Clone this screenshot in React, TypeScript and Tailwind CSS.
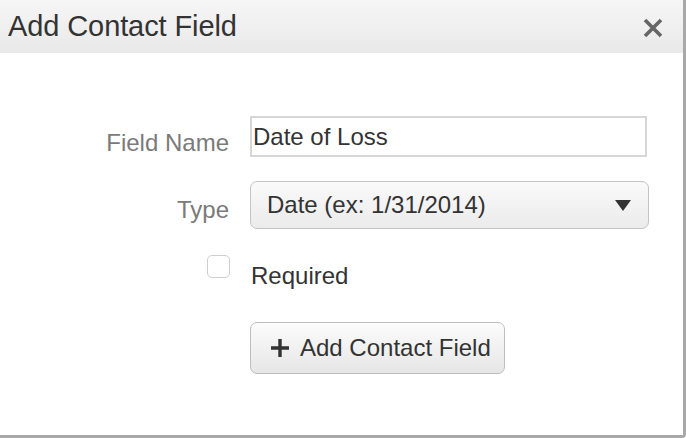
import React from "react";

export default function App() {
  return (
    <div className="w-[686px] h-[438px] bg-white" style={{ fontFamily: '"Liberation Sans", Arial, sans-serif' }}>
      <div className="w-[686px] h-[438px] bg-white border-r-[3px] border-b-[3px] border-[#a8a8a8] rounded-br-[4px] flex flex-col">
        <div className="h-[53px] bg-gradient-to-b from-[#f6f6f6] to-[#e9e9e9] flex items-center justify-between pl-[8px] pr-[19px]">
          <span className="text-[29px] text-[#333] tracking-[-0.1px] leading-none">Add Contact Field</span>
          <svg width="22" height="22" viewBox="0 0 22 22" className="mt-[3px]">
            <path d="M3 3 L19 19 M19 3 L3 19" stroke="#666" strokeWidth="3.6" strokeLinecap="butt" />
          </svg>
        </div>
        <div className="flex flex-col pt-[63px]">
          <div className="flex items-center h-[41px]">
            <div className="w-[229px] text-right text-[24px] text-[#7a7a7a] pt-[12px]">Field Name</div>
            <div className="ml-[21px] w-[397px] h-[41px] border-2 border-[#d6d6d6] flex items-center pl-[1px] text-[24px] text-[#333]">
              Date of Loss
            </div>
          </div>
          <div className="flex items-center h-[48px] mt-[24px]">
            <div className="w-[229px] text-right text-[24px] text-[#7a7a7a] pt-[9px]">Type</div>
            <div className="ml-[21px] w-[399px] h-[48px] border border-[#c4c4c4] rounded-[7px] bg-gradient-to-b from-[#fafafa] to-[#ebebeb] flex items-center justify-between pl-[16px] pr-[17px] text-[24px] text-[#333]">
              <span>Date (ex: 1/31/2014)</span>
              <svg width="16" height="11" viewBox="0 0 16 11">
                <path d="M0 0 L16 0 L8 11 Z" fill="#333" />
              </svg>
            </div>
          </div>
          <div className="flex items-center mt-[27px] h-[30px]">
            <div className="w-[229px] flex justify-end">
              <div className="w-[23px] h-[23px] rounded-[5px] border border-[#cfcfcf] bg-white mr-[-1px] mt-[-10px]" />
            </div>
            <div className="ml-[22px] text-[24px] text-[#333] pt-[9px]">Required</div>
          </div>
          <div className="flex mt-[36px]">
            <div className="w-[229px]" />
            <div className="ml-[21px] w-[255px] h-[52px] border border-[#bdbdbd] rounded-[7px] bg-gradient-to-b from-[#fcfcfc] to-[#e6e6e6] flex items-center pl-[20px] text-[24px] text-[#333]">
              <svg width="18" height="18" viewBox="0 0 18 18" className="mr-[11px]">
                <path d="M9 0 V18 M0 9 H18" stroke="#333" strokeWidth="3.4" />
              </svg>
              <span>Add Contact Field</span>
            </div>
          </div>
        </div>
      </div>
    </div>
  );
}
